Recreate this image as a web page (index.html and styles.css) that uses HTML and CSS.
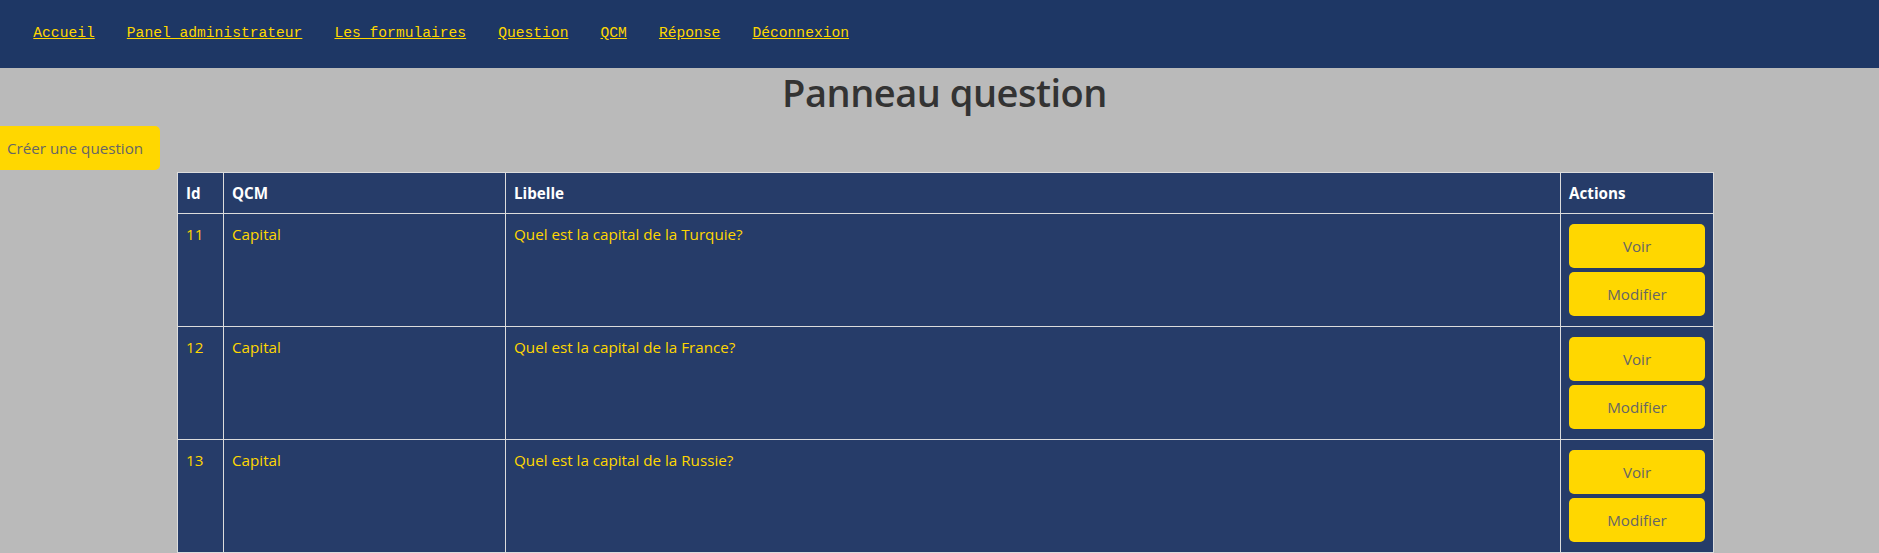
FILE: index.html
```html
<!DOCTYPE html>
<html lang="fr">
<head>
<meta charset="utf-8">
<title>Panneau question</title>
<link rel="stylesheet" href="styles.css">
</head>
<body>
<nav class="topnav">
  <a href="#">Accueil</a>
  <a href="#">Panel administrateur</a>
  <a href="#">Les formulaires</a>
  <a href="#">Question</a>
  <a href="#">QCM</a>
  <a href="#">Réponse</a>
  <a href="#">Déconnexion</a>
</nav>
<main class="page">
  <h1 class="title">Panneau question</h1>
  <a class="btn btn-create" href="#">Créer une question</a>
  <table class="qtable">
    <colgroup>
      <col class="c-id"><col class="c-qcm"><col class="c-lib"><col class="c-act">
    </colgroup>
    <thead>
      <tr><th>Id</th><th>QCM</th><th>Libelle</th><th>Actions</th></tr>
    </thead>
    <tbody>
      <tr>
        <td>11</td><td>Capital</td><td>Quel est la capital de la Turquie?</td>
        <td class="actions"><a class="btn btn-act" href="#">Voir</a><a class="btn btn-act" href="#">Modifier</a></td>
      </tr>
      <tr>
        <td>12</td><td>Capital</td><td>Quel est la capital de la France?</td>
        <td class="actions"><a class="btn btn-act" href="#">Voir</a><a class="btn btn-act" href="#">Modifier</a></td>
      </tr>
      <tr>
        <td>13</td><td>Capital</td><td>Quel est la capital de la Russie?</td>
        <td class="actions"><a class="btn btn-act" href="#">Voir</a><a class="btn btn-act" href="#">Modifier</a></td>
      </tr>
    </tbody>
  </table>
</main>
</body>
</html>
```
FILE: styles.css
```css
* { box-sizing: border-box; }
html, body { margin: 0; padding: 0; }
body {
  background: #bababa;
  font-family: "Segoe UI", "Open Sans", "Noto Sans", sans-serif;
  font-size: 15.2px;
  color: #333;
}
.topnav {
  display: flex;
  align-items: center;
  gap: 32.1px;
  height: 68px;
  padding: 0 0 2px 33.3px;
  background: #1e3765;
}
.topnav a {
  font-family: "Liberation Mono", "DejaVu Sans Mono", monospace;
  font-size: 14.63px;
  color: #ffd700;
  text-decoration: underline;
}
.title {
  margin: 0;
  padding-left: 10px;
  font-size: 38px;
  line-height: 48px;
  letter-spacing: -0.5px;
  font-weight: 600;
  text-align: center;
  color: #333;
}
.btn {
  display: block;
  height: 44px;
  line-height: 44px;
  background: #ffd700;
  color: #666;
  text-decoration: none;
  border-radius: 5px;
  font-size: 15.2px;
}
.btn-create {
  display: inline-block;
  margin: 10px 0 0 -13px;
  padding: 0 17px 0 20px;
}
.qtable {
  margin: 2px 0 0 177px;
  width: 1536px;
  table-layout: fixed;
  border-collapse: collapse;
  background: #263c69;
}
.c-id { width: 46px; }
.c-qcm { width: 282px; }
.c-lib { width: 1055px; }
.c-act { width: 153px; }
.qtable th, .qtable td {
  border: 1px solid #dcdcdc;
  text-align: left;
  vertical-align: top;
}
.qtable th {
  padding: 10px 8px;
  line-height: 20px;
  font-weight: 700;
  color: #fff;
}
.qtable td {
  padding: 10px 8px;
  line-height: 21px;
  color: #ffd700;
}
.btn-act {
  text-align: center;
  width: 136px;
}
.btn-act + .btn-act { margin-top: 4px; }
```
